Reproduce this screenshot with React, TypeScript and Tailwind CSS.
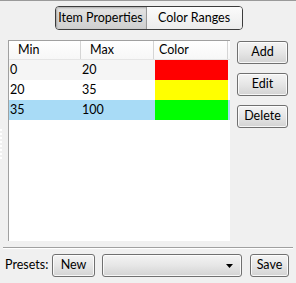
const font = { fontFamily: 'Lato, "Noto Sans", sans-serif' };

const btn =
  'flex items-center justify-center rounded-[3px] border border-[#707070] bg-gradient-to-b from-[#f4f4f4] via-[#e6e6e6] to-[#d3d3d3] text-[12.5px] text-black shadow-[inset_0_0_0_1px_rgba(255,255,255,0.8)]';

const rows = [
  { min: '0', max: '20', color: 'bg-[#ff0000]', row: 'bg-[#f5f5f5]' },
  { min: '20', max: '35', color: 'bg-[#ffff00]', row: 'bg-white' },
  { min: '35', max: '100', color: 'bg-[#00ff00]', row: 'bg-[#a8dbf6]' },
];

export default function App() {
  return (
    <div
      className="relative flex h-[283px] w-[296px] flex-col overflow-hidden border-t border-[#9a9a9a] bg-[#f0f0f0] text-[12.5px] leading-none text-black"
      style={font}
    >
      <div className="mt-[5px] flex justify-center pl-[1px]">
        <div className="flex h-[24px] overflow-hidden rounded-[4px] border border-[#3c3c3c]">
          <div className="flex w-[91px] items-center justify-center border-r border-[#9a9a9a] bg-gradient-to-b from-[#e4e4e4] to-[#cfcfcf] shadow-[inset_1px_1px_2px_rgba(0,0,0,0.25)]">
            Item Properties
          </div>
          <div className="flex w-[95px] items-center justify-center bg-gradient-to-b from-[#fbfbfb] to-[#ececec]">
            Color Ranges
          </div>
        </div>
      </div>

      <div className="mt-[10px] flex">
        <div className="ml-[8px] h-[201px] w-[222px] border-l border-t border-[#a0a0a0] bg-white">
          <div className="flex h-[19px] border-b border-[#e5e5e5] bg-gradient-to-b from-white to-[#f7f7f7]">
            <div className="flex w-[72px] items-center border-r border-[#d5d5d5] pl-[9px]">Min</div>
            <div className="flex w-[73px] items-center border-r border-[#d5d5d5] pl-[9px]">Max</div>
            <div className="flex w-[74px] items-center border-r border-[#d5d5d5] pl-[5px]">Color</div>
          </div>
          {rows.map((r) => (
            <div key={r.min} className={`flex h-[20px] ${r.row}`}>
              <div className="flex w-[72px] items-center pl-[1px]">{r.min}</div>
              <div className="flex w-[74px] items-center pl-[1px]">{r.max}</div>
              <div className={`w-[73px] ${r.color}`} />
            </div>
          ))}
        </div>

        <div className="ml-[7px] flex flex-col gap-[9px] pt-[1px]">
          <div className={`${btn} h-[23px] w-[51px]`}>Add</div>
          <div className={`${btn} h-[23px] w-[51px]`}>Edit</div>
          <div className={`${btn} h-[23px] w-[51px]`}>Delete</div>
        </div>
      </div>

      <div className="absolute left-0 top-[128px] flex flex-col gap-[2px]">
        {[0, 1, 2, 3, 4, 5, 6, 7].map((i) => (
          <div key={i} className="h-[2px] w-[2px] bg-white" />
        ))}
      </div>

      <div className="mx-[3px] mt-[6px] border-t border-[#a0a0a0] border-b border-b-white" />

      <div className="mt-[5px] flex items-center">
        <div className="ml-[5px] w-[47px]">Presets:</div>
        <div className={`${btn} h-[23px] w-[43px]`}>New</div>
        <div className={`${btn} ml-[7px] h-[23px] w-[140px] justify-end pr-[8px]`}>
          <svg width="7" height="4" viewBox="0 0 7 4">
            <path d="M0 0h7L3.5 4z" fill="#000" />
          </svg>
        </div>
        <div className={`${btn} ml-[8px] h-[23px] w-[39px]`}>Save</div>
      </div>
    </div>
  );
}
